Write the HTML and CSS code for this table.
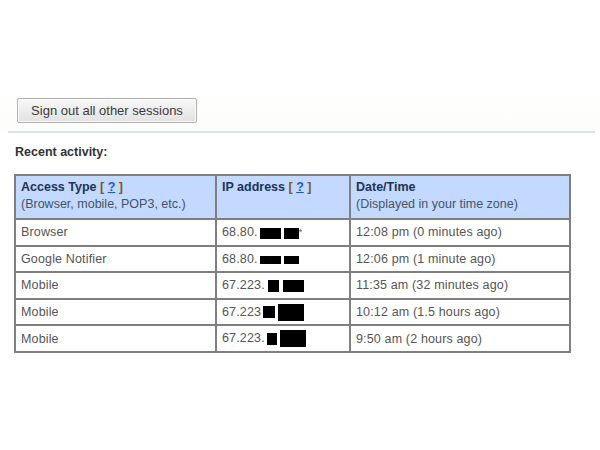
FILE: index.html
```html
<!DOCTYPE html>
<html>
<head>
<meta charset="utf-8">
<link rel="stylesheet" href="styles.css">
</head>
<body>
<div class="page">
  <div class="actions">
    <button class="btn">Sign out all other sessions</button>
  </div>
  <div class="rule"></div>
  <div class="section">
    <div class="title">Recent activity:</div>
    <table class="activity">
      <tr class="head">
        <th class="c1"><span class="h">Access Type <span class="br">[</span> <a href="#">?</a> <span class="br">]</span></span><br><span class="sub">(Browser, mobile, POP3, etc.)</span></th>
        <th class="c2"><span class="h">IP address <span class="br">[</span> <a href="#">?</a> <span class="br">]</span></span></th>
        <th class="c3"><span class="h">Date/Time</span><br><span class="sub">(Displayed in your time zone)</span></th>
      </tr>
      <tr>
        <td>Browser</td>
        <td>68.80.<span class="red r1a"></span><span class="red r1b"></span><span class="star">*</span></td>
        <td>12:08 pm (0 minutes ago)</td>
      </tr>
      <tr>
        <td>Google Notifier</td>
        <td>68.80.<span class="red r2a"></span><span class="red r2b"></span></td>
        <td>12:06 pm (1 minute ago)</td>
      </tr>
      <tr>
        <td>Mobile</td>
        <td>67.223.<span class="red r3a"></span><span class="red r3b"></span></td>
        <td>11:35 am (32 minutes ago)</td>
      </tr>
      <tr>
        <td>Mobile</td>
        <td>67.223<span class="red r4a"></span><span class="red r4b"></span></td>
        <td>10:12 am (1.5 hours ago)</td>
      </tr>
      <tr>
        <td>Mobile</td>
        <td>67.223.<span class="red r5a"></span><span class="red r4b"></span></td>
        <td>9:50 am (2 hours ago)</td>
      </tr>
    </table>
  </div>
</div>
</body>
</html>
```
FILE: styles.css
```css
html, body {
  margin: 0;
  padding: 0;
  background: #ffffff;
}
body {
  font-family: "Liberation Sans", Arial, sans-serif;
  color: #444;
}
.page {
  width: 600px;
  height: 450px;
  padding-top: 80px;
  box-sizing: border-box;
}
.actions {
  padding: 18px 0 0 17px;
  height: 51px;
  box-sizing: border-box;
  background: linear-gradient(#fff, #fdfdfb);
}
.btn {
  font-family: "Liberation Sans", Arial, sans-serif;
  font-size: 13px;
  color: #3a3a3a;
  height: 25px;
  width: 180px;
  padding: 0;
  border: 1px solid #b0b0b0;
  border-radius: 2px;
  background: linear-gradient(#f8f8f8, #e2e2e2);
  box-shadow: inset 0 0 0 1px #fbfbfb;
  margin: 0;
}
.rule {
  margin: 0 5px 0 8px;
  height: 2px;
  background: #dfe6e6;
}
.section {
  padding: 12px 0 0 14px;
}
.title {
  font-size: 12.5px;
  font-weight: bold;
  color: #333;
  padding-left: 1px;
  height: 29px;
}
.activity {
  border-collapse: collapse;
  border: 2px solid #858585;
  font-size: 12.5px;
  width: 557px;
  table-layout: fixed;
}
.activity th, .activity td {
  border: 2px solid #7f7f7f;
  text-align: left;
  vertical-align: middle;
  padding: 0 5px;
}
.activity td {
  height: 24.6px;
  color: #555;
  white-space: nowrap;
  letter-spacing: 0.15px;
}
.activity th {
  background: #c3d9ff;
  height: 39px;
  padding-top: 3px;
  vertical-align: top;
  font-weight: normal;
  line-height: 17px;
}
.c1 { width: 189px; }
.c2 { width: 122px; }
.h {
  font-weight: bold;
  color: #223355;
}
.br {
  color: #7a5a20;
}
.h a {
  color: #2255cc;
  text-decoration: underline;
}
.sub {
  color: #445566;
}
.red {
  display: inline-block;
  background: #000;
  vertical-align: middle;
}
.star { vertical-align: top; line-height: 14px; font-size: 9px; }
.r1a { width: 21px; height: 11px; margin-left: 2px; }
.r1b { width: 15px; height: 11px; margin-left: 3px; }
.r2a { width: 21px; height: 8px; margin-left: 2px; }
.r2b { width: 15px; height: 8px; margin-left: 3px; }
.r3a { width: 11px; height: 12px; margin-left: 3px; }
.r3b { width: 21px; height: 12px; margin-left: 4px; }
.r4a { width: 12px; height: 12px; margin-left: 2px; }
.r4b { width: 26px; height: 17px; margin-left: 3px; }
.r5a { width: 10px; height: 12px; margin-left: 2px; }
```
